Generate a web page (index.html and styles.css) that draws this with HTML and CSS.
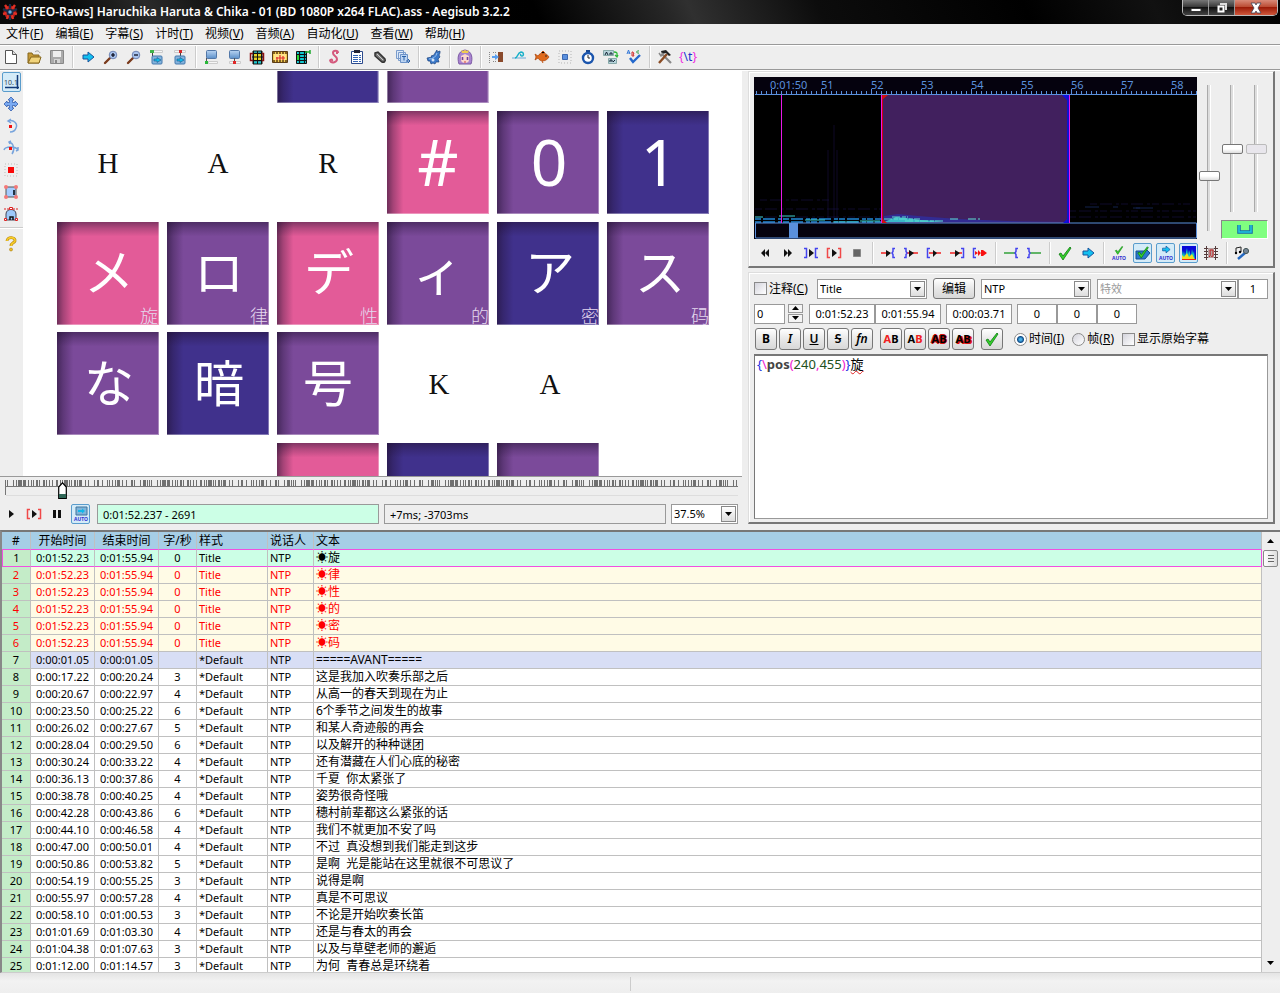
FILE: index.html
```html
<!DOCTYPE html>
<html lang="zh-CN">
<head>
<meta charset="utf-8">
<title>Aegisub 3.2.2</title>
<link rel="stylesheet" href="styles.css">
</head>
<body>
<svg class="defs" aria-hidden="true">
  <defs>
    <linearGradient id="shadeX" x1="0" x2="1" y1="0" y2="0"><stop offset="0" stop-color="#201030" stop-opacity=".6"/><stop offset=".06" stop-color="#201030" stop-opacity=".32"/><stop offset=".16" stop-color="#201030" stop-opacity="0"/></linearGradient>
    <linearGradient id="shadeY" x1="0" x2="0" y1="0" y2="1"><stop offset="0" stop-color="#201030" stop-opacity=".5"/><stop offset=".06" stop-color="#201030" stop-opacity=".25"/><stop offset=".14" stop-color="#201030" stop-opacity="0"/></linearGradient>
    <linearGradient id="screen" x1="0" x2="0" y1="0" y2="1"><stop offset="0" stop-color="#b9d4f2"/><stop offset="1" stop-color="#5b8fc9"/></linearGradient>
    <symbol id="arrow" viewBox="0 0 16 16"><path d="M3 6h5V3l6 5-6 5v-3H3z" fill="#12c0f0" stroke="#17539c"/></symbol>
    <symbol id="check" viewBox="0 0 16 16"><path d="M2 9l2-1 2 3 7-9 1 1L6 15z" fill="#35d02c" stroke="#0c7a10" stroke-width=".8"/></symbol>
    <symbol id="lens" viewBox="0 0 16 16"><path d="M2 14l5-5" stroke="#7a3a1c" stroke-width="2.4" stroke-linecap="round"/><circle cx="10" cy="6" r="3.8" fill="#a9c4ee" stroke="#7186b5"/></symbol>
    <symbol id="down" viewBox="0 0 7 4"><path d="M0 0h7L3.500 4z" fill="#000"/></symbol>
    <symbol id="up" viewBox="0 0 7 4"><path d="M0 4h7L3.500 0z" fill="#000"/></symbol>
    <symbol id="tile" viewBox="0 0 101 102"><path d="M0 0h101v102H0z" fill="currentColor"/><path d="M0 0h101v102H0z" fill="url(#shadeX)"/><path d="M0 0h101v102H0z" fill="url(#shadeY)"/><path d="M100.500 0v101.500H0" fill="none" stroke="#fff" stroke-opacity=".35"/></symbol>
  </defs>
</svg>

<header class="titlebar">
  <svg class="appicon" viewBox="0 0 16 16"><circle cx="8" cy="8" r="6.500" fill="#a01818"/><path d="M3 1l3 4M13 1l-3 4M1 10l4-1M15 10l-4-1M5 15l1-4M11 15l-1-4" stroke="#e03024" stroke-width="2.400"/><path d="M8 0v4M1 5l4 2M15 5l-4 2M8 16v-4" stroke="#18304c" stroke-width="2"/><circle cx="8" cy="8" r="3.500" fill="#1c2a48"/><circle cx="8" cy="8" r="1.700" fill="#62aee0"/></svg>
  <h1>[SFEO-Raws] Haruchika Haruta &amp; Chika - 01 (BD 1080P x264 FLAC).ass - Aegisub 3.2.2</h1>
  <div class="winbtns">
    <button aria-label="Minimize"><svg viewBox="0 0 12 12" width="12" height="12"><path d="M1 6.500h10v3H1z" fill="#fff" stroke="#333"/></svg></button>
    <button aria-label="Restore"><svg viewBox="0 0 12 12" width="12" height="12"><path d="M4 1h7v7H9V3H4z" fill="#ddd"/><path d="M2.500 4.500h5v5h-5z" fill="#222" stroke="#fff" stroke-width="2"/></svg></button>
    <button class="close" aria-label="Close"><svg viewBox="0 0 14 12" width="14" height="12"><path d="M2 1h4l1 2 1-2h4l-3 5 3 5H8L7 9l-1 2H2l3-5z" fill="#fff" stroke="#445" stroke-width=".8"/></svg></button>
  </div>
</header>

<nav class="menubar">
  <button>文件(<u>F</u>)</button><button>编辑(<u>E</u>)</button><button>字幕(<u>S</u>)</button><button>计时(<u>T</u>)</button><button>视频(<u>V</u>)</button><button>音频(<u>A</u>)</button><button>自动化(<u>U</u>)</button><button>查看(<u>W</u>)</button><button>帮助(<u>H</u>)</button>
</nav>

<div class="toolbar main-tools" role="toolbar">
  <button aria-label="New"><svg viewBox="0 0 16 16"><path d="M2.500 1.500h7l4 4v9h-11z" fill="#fff" stroke="#555"/><path d="M9.500 1.500v4h4" fill="#ddd" stroke="#555"/></svg></button>
  <button aria-label="Open"><svg viewBox="0 0 16 16"><path d="M2 14V4h4l1 2h6v8z" fill="#c59a38" stroke="#86671c"/><path d="M2 14l3-6h10l-2 6z" fill="#f1d47c" stroke="#86671c"/><path d="M9 3c2-2 4-1 5 1" fill="none" stroke="#999"/></svg></button>
  <button aria-label="Save"><svg viewBox="0 0 16 16"><path d="M1.500 1.500h13v13h-13z" fill="#aaa" stroke="#888"/><path d="M4 2h8v6H4z" fill="#eee"/><path d="M5 10h6v4H5z" fill="#d5d5d5"/><path d="M6 11h2v3H6z" fill="#888"/></svg></button>
  <i class="sep"></i>
  <button aria-label="Jump"><svg><use href="#arrow"/></svg></button>
  <button aria-label="Zoom in"><svg viewBox="0 0 16 16"><use href="#lens"/><path d="M8 6h4M10 4v4" stroke="#001" stroke-width="1.200"/></svg></button>
  <button aria-label="Zoom out"><svg viewBox="0 0 16 16"><use href="#lens"/><path d="M8 6h4" stroke="#001" stroke-width="1.200"/></svg></button>
  <button aria-label="Jump to start"><svg viewBox="0 0 16 16"><path d="M4.500 1.500h9v2h-9" fill="#f6f6f6" stroke="#ccc"/><path d="M1 1h4v3H1z" fill="#3fb54a"/><path d="M3.500 4v3" stroke="#444"/><rect x="3" y="7" width="10" height="8" rx="1" fill="#84b4de" stroke="#4478ac"/><path d="M5 10h3V8.500l4 2.500-4 2.500V12H5z" fill="#12b8ea" stroke="#205888" stroke-width=".6"/></svg></button>
  <button aria-label="Jump to end"><svg viewBox="0 0 16 16"><path d="M2.500 1.500h11v2h-11z" fill="#f6f6f6" stroke="#ccc"/><path d="M7 1h3v3H7z" fill="#d62a2a"/><path d="M8.500 4v3" stroke="#444"/><rect x="3" y="7" width="10" height="8" rx="1" fill="#84b4de" stroke="#4478ac"/><path d="M5 10h3V8.500l4 2.500-4 2.500V12H5z" fill="#12b8ea" stroke="#205888" stroke-width=".6"/></svg></button>
  <i class="sep"></i>
  <button aria-label="Start to video"><svg viewBox="0 0 16 16"><path d="M5.500 12.500h9v2h-9z" fill="#f6f6f6" stroke="#ccc"/><rect x="3.500" y="1.500" width="10" height="8" rx="1" fill="url(#screen)" stroke="#5378a8"/><path d="M3.500 9v3" stroke="#555"/><path d="M2 12h3v3H2z" fill="#28b838"/></svg></button>
  <button aria-label="End to video"><svg viewBox="0 0 16 16"><path d="M3.500 12.500h11v2h-11z" fill="#f6f6f6" stroke="#ccc"/><rect x="3.500" y="1.500" width="10" height="8" rx="1" fill="url(#screen)" stroke="#5378a8"/><path d="M8.500 9v3" stroke="#555"/><path d="M7 12h3v3H7z" fill="#e02828"/></svg></button>
  <button aria-label="Select visible"><svg viewBox="0 0 16 16"><path d="M4 2h9v13H4z" fill="#18c8d0" stroke="#111"/><path d="M1.500 4.500h13v7h-13z" fill="none" stroke="#8a1010" stroke-width="1.500"/><path d="M4 5h9v6H4z" fill="#e8d428"/><path d="M4.500 2v13M12.500 2v13M8.500 2v13M3 8h11M4 4.500h9M4 11.500h9" stroke="#111"/></svg></button>
  <button aria-label="Snap to scene"><svg viewBox="0 0 16 16"><path d="M.5 2.500h15v11H.5z" fill="#f2cc50" stroke="#5d3d14"/><path d="M1 4h14M1 12h14" stroke="#5d3d14" stroke-width="1.500" stroke-dasharray="2 1"/><path d="M2 5h12v6H2z" fill="#ffe48a"/><path d="M5 8v3M8 6v5M11 7v4M4 9h9" stroke="#e03030" stroke-width="1.200"/></svg></button>
  <button aria-label="Shift to frame"><svg viewBox="0 0 16 16"><path d="M1.500 2.500h10v12h-10z" fill="#12cad2" stroke="#111"/><path d="M2 5.500h9M2 8.500h9M2 11.500h9M4.500 3v11M9.500 3v11" stroke="#111" stroke-width="1.200"/><path d="M2 6h2v5H2z" fill="#28d834"/><path d="M10 3h5M15 1v4" stroke="#1faa30" stroke-width="1.500"/></svg></button>
  <i class="sep"></i>
  <button aria-label="Styles"><svg viewBox="0 0 16 16"><path d="M12 4c0-3-5-3-5 0s4 3 4 6-5 5-7 2M4 12c0-2 3-2 2 0M12 4h-2" fill="none" stroke="#d4587c" stroke-width="2"/></svg></button>
  <button aria-label="Properties"><svg viewBox="0 0 16 16"><path d="M2.500 2.500h11v12h-11z" fill="#fff" stroke="#2c4a8c"/><path d="M5 1h6v3H5z" fill="#223"/><path d="M4 6.500h8M4 8.500h8M4 10.500h8M4 12.500h8" stroke="#3464b4" stroke-dasharray="5 1 2 1"/></svg></button>
  <button aria-label="Attachments"><svg viewBox="0 0 16 16"><path d="M3 4l3-1 7 7c1 2-1 4-3 3L3 7z" fill="#777" stroke="#333" stroke-width="1.500"/><path d="M5 5l6 6" stroke="#ccc"/></svg></button>
  <button aria-label="Fonts"><svg viewBox="0 0 16 16"><path d="M1.500 1.500h7v8h-7zM3.500 3.500h7v8h-7z" fill="#dce8f8" stroke="#7a9ccc"/><path d="M5.500 5.500h7v8h-7z" fill="#bcd4f2" stroke="#6c92c8"/><path d="M7 7.500h4M9 7.500v4M11 12h4M13 10l2 2-2 2" stroke="#2b61a8" fill="none"/></svg></button>
  <i class="sep"></i>
  <button aria-label="Automation"><svg viewBox="0 0 16 16"><path d="M14 2l-3 1V1L9 4l-1 2-3 1 1 1-5 1 1 3 2 0 1 3 2-1 2 1 1-2 3 0-1-3 2-2-1-2 1-2z" fill="#3a78c8" stroke="#1c4480" stroke-width=".7"/><path d="M3 10c4 0 7-2 8-6" stroke="#98c0f0" fill="none"/><circle cx="7" cy="11" r="1.500" fill="#d4e4f8"/></svg></button>
  <i class="sep"></i>
  <button aria-label="Assistant"><svg viewBox="0 0 16 16"><path d="M2 15C0 9 1 2 8 1c7 1 8 8 6 14z" fill="#a884d0" stroke="#7c58a4"/><path d="M4 7l4-2 4 2v4c0 4-8 4-8 0z" fill="#fbd8cc"/><path d="M5.500 8v3M10.500 8v3" stroke="#7040a0" stroke-width="1.600"/><path d="M4 1l2 1 2-1 2 1 2-1-1 3H5z" fill="#f0cc50"/><path d="M7 13h2" stroke="#d04040"/></svg></button>
  <i class="sep"></i>
  <button aria-label="Shift times"><svg viewBox="0 0 16 16"><path d="M1.500 3v11M5 3.500h4M5 12.500h4" stroke="#888" stroke-dasharray="1 1"/><path d="M10 3h5v10h-5z" fill="#8a4a2c"/><path d="M4 7h3V5l4 3-4 3V9H4z" fill="#5aa0f0"/></svg></button>
  <button aria-label="Timing processor"><svg viewBox="0 0 16 16"><path d="M1 9h14" stroke="#6aaad8"/><path d="M4 9c3 0 2-5 6-6 3 0 3 4 1 4-1 0-2-1-1-2" fill="none" stroke="#18b0c8" stroke-width="1.500"/></svg></button>
  <button aria-label="Kanji timer"><svg viewBox="0 0 16 16"><path d="M1 5l3 2c2-4 8-4 11 1-3 5-9 5-11 1l-3 2 1-3z" fill="#e06a1c" stroke="#a8440c" stroke-width=".7"/><path d="M7 4l2-2 2 2M8 12l1 2" stroke="#c05010"/><circle cx="12" cy="7" r=".8" fill="#222"/></svg></button>
  <button aria-label="Resample"><svg viewBox="0 0 16 16"><path d="M2 2h12v12H2z" fill="none" stroke="#b5b5b5" stroke-dasharray="1 2"/><path d="M5.500 5.500h5v5h-5z" fill="#5a90de" stroke="#3c68b0"/></svg></button>
  <button aria-label="Timing"><svg viewBox="0 0 16 16"><path d="M6 1h4v2H6z" fill="#1a4890"/><circle cx="8" cy="9" r="5" fill="#fff" stroke="#1b55ad" stroke-width="2.400"/><path d="M8 6v3h2" fill="none" stroke="#222"/></svg></button>
  <button aria-label="Translation"><svg viewBox="0 0 16 16"><path d="M.5 1.500h10v5H.5zM5.500 9.500h8v5h-8z" fill="#b8d4dc" stroke="#8aa"/><path d="M2 6l1.500-3L5 6M7 6V4h2v2M7 13v-2h2v2M10 13l2-2" fill="none" stroke="#123"/><path d="M11 3c4 0 3 2 3 5m-2-2l2 2 1-2" fill="none" stroke="#2cb838" stroke-width="1.300"/></svg></button>
  <button aria-label="Spell check"><svg viewBox="0 0 16 16"><path d="M1 5l1.500-4L4 5M2 4h2" fill="none" stroke="#3478d8"/><path d="M6 3v4h2L7 5h1L7 3z" fill="none" stroke="#d03030"/><path d="M13 2c-3-1-3 3 0 2" fill="none" stroke="#209838"/><path d="M4 9l3 4 7-7" fill="none" stroke="#2468cc" stroke-width="2.400"/></svg></button>
  <i class="sep"></i>
  <button aria-label="Options"><svg viewBox="0 0 16 16"><path d="M5 5l9 9" stroke="#888" stroke-width="2.200"/><path d="M2 14l8-9" stroke="#8a4c24" stroke-width="2.400"/><path d="M4 2l5-1 5 5-2 1-3-3-4 1z" fill="#222"/><path d="M2 4l2 3 2-3" fill="none" stroke="#888" stroke-width="1.500"/></svg></button>
  <button aria-label="Toggle tags" class="tag"><span>{</span>\t<span>}</span></button>
</div>

<main class="workspace">
  <section class="video">
    <div class="stage">
      <div class="visual-tools" role="toolbar">
        <button class="on" aria-label="Standard"><svg viewBox="0 0 16 16"><text x="0" y="11" font-size="7" fill="#345">10.1</text><path d="M1 13.500h14M13.500 1v14" stroke="#123a78" stroke-width="1.500"/></svg></button>
        <button aria-label="Drag"><svg viewBox="0 0 16 16"><path d="M8 1l3 3H9.500v2.500H12V5l3 3-3 3V9.500H9.500V12H11l-3 3-3-3h1.500V9.500H4V11L1 8l3-3v1.500h2.500V4H5z" fill="#7aaaf2" stroke="#365fae" stroke-width=".8"/></svg></button>
        <button aria-label="Rotate Z"><svg viewBox="0 0 16 16"><path d="M5 3c6-2 10 3 8 7-1 3-4 4-6 4M8 1L5 3l3 2" fill="none" stroke="#78a4dc" stroke-width="1.500"/><path d="M6 7h3v3H6z" fill="#f01010"/></svg></button>
        <button aria-label="Rotate XY"><svg viewBox="0 0 16 16"><path d="M1 10c1-4 12-4 14 0M6 2c5 1 6 8 3 12M8 1L6 2l1 2M13 11l2-1V7" fill="none" stroke="#78a4dc" stroke-width="1.500"/><path d="M6 7h3v3H6z" fill="#f01010"/></svg></button>
        <button aria-label="Scale"><svg viewBox="0 0 16 16"><path d="M2 2h12v12H2z" fill="none" stroke="#bbb" stroke-dasharray="1 2"/><path d="M5 5h6v6H5z" fill="#fa0808"/></svg></button>
        <button aria-label="Clip"><svg viewBox="0 0 16 16"><path d="M3 3h10v10H3z" fill="#a4ccff" stroke="#555"/><g fill="#f47878"><circle cx="3" cy="3" r="2"/><circle cx="13" cy="3" r="2"/><circle cx="3" cy="13" r="2"/><circle cx="13" cy="13" r="2"/></g><path d="M10 6h2v5h-2" fill="#234"/></svg></button>
        <button aria-label="Vector clip"><svg viewBox="0 0 16 16"><path d="M3 14V8c0-6 10-6 10 0v6z" fill="#9cc8fa" stroke="#445"/><path d="M1 3h14" stroke="#d22" stroke-dasharray="2 1"/><path d="M6.500 1.500h3v2h-3zM1.500 12.500h2v2h-2zM12.500 12.500h2v2h-2z" fill="#fff" stroke="#d22"/><path d="M7 14v-3h3v3" stroke="#111" fill="none" stroke-width="1.500"/></svg></button>
        <i class="hsep"></i>
        <button aria-label="Help"><svg viewBox="0 0 16 16"><path d="M4 5c0-5 9-4 8 0-1 2-4 2-4 5" fill="none" stroke="#b98812" stroke-width="2.800"/><path d="M4 5c0-5 9-4 8 0-1 2-4 2-4 5" fill="none" stroke="#f8ce28" stroke-width="1.600"/><circle cx="8" cy="13.500" r="1.500" fill="#f0c020" stroke="#a87a10" stroke-width=".6"/></svg></button>
      </div>
      <svg class="frame" viewBox="23 71 719 405" preserveAspectRatio="xMidYMid slice">
        <g>
          <use href="#tile" color="#40318c" x="277" y="1" width="102" height="102"/><use href="#tile" color="#7b4a9a" x="387" y="1" width="102" height="102"/>
          <use href="#tile" color="#e35b98" x="387" y="111" width="102" height="103"/><use href="#tile" color="#7b4a9a" x="497" y="111" width="102" height="103"/><use href="#tile" color="#40318c" x="607" y="111" width="102" height="103"/>
          <use href="#tile" color="#e35b98" x="57" y="222" width="102" height="103"/><use href="#tile" color="#7b4a9a" x="167" y="222" width="102" height="103"/><use href="#tile" color="#e35b98" x="277" y="222" width="102" height="103"/><use href="#tile" color="#7b4a9a" x="387" y="222" width="102" height="103"/><use href="#tile" color="#40318c" x="497" y="222" width="102" height="103"/><use href="#tile" color="#7b4a9a" x="607" y="222" width="102" height="103"/>
          <use href="#tile" color="#7b4a9a" x="57" y="332" width="102" height="103"/><use href="#tile" color="#40318c" x="167" y="332" width="102" height="103"/><use href="#tile" color="#7b4a9a" x="277" y="332" width="102" height="103"/>
          <use href="#tile" color="#e35b98" x="277" y="443" width="102" height="103"/><use href="#tile" color="#40318c" x="387" y="443" width="102" height="103"/><use href="#tile" color="#7b4a9a" x="497" y="443" width="102" height="103"/>
        </g>
        <g class="latin"><text x="108" y="173">H</text><text x="218" y="173">A</text><text x="328" y="173">R</text><text x="439" y="394">K</text><text x="550" y="394">A</text></g>
        <g class="num"><text x="438" y="186">#</text><text x="549" y="186">0</text><text x="659" y="186">1</text></g>
        <g class="kana" lang="ja"><text x="109" y="291">メ</text><text x="219" y="291">ロ</text><text x="329" y="291">デ</text><text x="438" y="291">ィ</text><text x="550" y="291">ア</text><text x="660" y="291">ス</text><text x="109" y="402">な</text><text x="219" y="402">暗</text><text x="328" y="402">号</text></g>
        <g class="han"><text x="149" y="323">旋</text><text x="259" y="323">律</text><text x="369" y="323">性</text><text x="480" y="323">的</text><text x="590" y="323">密</text><text x="700" y="323">码</text></g>
      </svg>
    </div>
    <div class="seek">
      <svg class="keys" height="17" width="100%">
        <path d="M1.500 0v15" stroke="#777"/><path d="M2 15.500h2000" stroke="#ddd"/><path d="M1 6.500h2000" stroke="#777"/>
        <line x1="1" x2="2000" y1="3" y2="3" stroke="#707070" stroke-width="6" stroke-dasharray="1 1 1 5 1 2 1 1 4 1 3 2 1 2 1 1 1 2 2 1 1 3 2 1 1 2 1 2 1 3 2 2 1 1 1 1 4 1 1 1 1 2 2 1 1 1 3 3 1 2 1 5 1 2 2 3 1 4 1 1 1 2 1 2 1 1 3 2 1 3 1 4 2 1 1 5 1 2 3 1 1 1"/>
      </svg>
      <input type="range" aria-label="Video position" min="0" max="1000" value="74">
    </div>
    <div class="vcontrols">
      <div class="toolbar">
        <button aria-label="Play"><svg viewBox="0 0 16 16"><path d="M6 4l5 4-5 4z" fill="#111"/></svg></button>
        <button aria-label="Play line"><svg viewBox="0 0 16 16"><path d="M4 3.500H1.500v9H4M12 3.500h2.500v9H12" fill="none" stroke="#f04848" stroke-width="1.500"/><path d="M6 4l5 4-5 4z" fill="#111"/></svg></button>
        <button aria-label="Pause"><svg viewBox="0 0 16 16"><path d="M4 4h3v8H4zM9 4h3v8H9z" fill="#111"/></svg></button>
        <button class="on" aria-label="Auto scroll video"><svg viewBox="0 0 16 16"><path d="M3 1h11v8H3z" fill="#7fb4da" stroke="#43749c"/><path d="M5 4h4V2.500L12 5 9 7.500V6H5z" fill="#10b8ea"/><text x="8" y="15" text-anchor="middle" font-size="5" font-weight="700" fill="#3030d0">AUTO</text></svg></button>
      </div>
      <input class="pos green" aria-label="Position" readonly value="0:01:52.237 - 2691">
      <input class="pos" aria-label="Offset" readonly value="+7ms; -3703ms">
      <div class="combo zoombox"><select aria-label="Zoom"><option>37.5%</option></select><span><svg width="7" height="4"><use href="#down"/></svg></span></div>
    </div>
  </section>

  <section class="side">
    <div class="panel audio">
      <div class="audio-top">
        <svg class="spectrum" viewBox="754 77 443 162" preserveAspectRatio="none">
          <path d="M754 77h443v162H754z" fill="#05020e"/><path d="M754 95h443v128H754z" fill="#000"/>
          <path d="M828 150v70M834 125v95M837 150v70" stroke="#181040" opacity=".6"/>
          <path d="M755 217h126M755 209h126M760 200h70M1069 217h127M1069 211h127M1090 204h100" stroke="#1a1348" stroke-width="2" stroke-dasharray="7 3 12 4 3 2" opacity=".3"/>
          <path d="M755 219h126M755 222h126" stroke="#1766a0" stroke-width="2" stroke-dasharray="6 2 12 3 4 1"/><path d="M755 217h8M779 216h16M805 220h20M833 222h25M860 221h20" stroke="#3ed0c8" stroke-width="1"/>
          <path d="M1085 207h14M1113 207h5M1133 208h20M1136 208h4" stroke="#203a80" opacity=".6"/>
          <path d="M883 95h186v128H883z" fill="#41205e"/>
          <path d="M884 222v-6l14-2 20 2 40 3 50 2 60 1z" fill="#2e2ea0" opacity=".8"/><path d="M884 222l12-5 10 1 14 2 22 1-10 1z" fill="#3ab8c8"/><path d="M884 219h36M892 217h16M905 221h40M950 219h9M968 219h12" stroke="#60e0d0" stroke-dasharray="8 2 4 1"/>
          <path d="M755 94.500h442M755.500 223v15h441v-15z" fill="none" stroke="#5a90dc"/>
          <path d="M756 92.500h441" stroke="#5a90dc" stroke-width="3" stroke-dasharray="1 4"/><path d="M771 91.500h426" stroke="#5a90dc" stroke-width="5" stroke-dasharray="1 49"/>
          <path d="M789 223h9v15h-9z" fill="#5a90dc"/>
          <path d="M781.500 95v128M881.500 95v128M1069.500 95v128" stroke="#e818e8"/>
          <path d="M882.500 95v128" stroke="#d00010"/><path d="M1068 95v128" stroke="#1010d0" stroke-width="2"/>
          <path d="M882 95h6l-6 5zM882 223h5l-5-5z" fill="#d01010"/><path d="M1067 95h-5l5 5zM1067 223h-4l4-4z" fill="#1010e0"/>
          <g class="ruler"><text x="770" y="89">0:01:50</text><text x="821" y="89">51</text><text x="871" y="89">52</text><text x="921" y="89">53</text><text x="971" y="89">54</text><text x="1021" y="89">55</text><text x="1071" y="89">56</text><text x="1121" y="89">57</text><text x="1171" y="89">58</text></g>
        </svg>
        <input class="vr tall" type="range" aria-label="Horizontal zoom" value="63">
        <div class="volume">
          <input class="vr" type="range" aria-label="Vertical zoom" value="50"><input class="vr dim" type="range" aria-label="Volume" value="50">
          <button class="link" aria-label="Link"><svg width="16" height="9" viewBox="0 0 16 9"><path d="M2 0v7h12V0" fill="none" stroke="#1565a8" stroke-width="3.500"/><path d="M2 0v7h12V0" fill="none" stroke="#20c8e0" stroke-width="1.500"/></svg></button>
        </div>
      </div>
      <div class="toolbar" role="toolbar">
        <button aria-label="Previous"><svg viewBox="0 0 16 16"><path d="M8 4v8L4 8zM12 4v8L8 8z" fill="#111"/></svg></button>
        <button aria-label="Next"><svg viewBox="0 0 16 16"><path d="M4 4l4 4-4 4zM8 4l4 4-4 4z" fill="#111"/></svg></button>
        <button aria-label="Play selection"><svg viewBox="0 0 16 16"><path d="M1 3.500h2.500v9H1M15 3.500h-2.500v9H15" fill="none" stroke="#4444ee" stroke-width="1.500"/><path d="M6 4l5 4-5 4z" fill="#111"/></svg></button>
        <button aria-label="Play line"><svg viewBox="0 0 16 16"><path d="M4 3.500H1.500v9H4M12 3.500h2.500v9H12" fill="none" stroke="#f04848" stroke-width="1.500"/><path d="M6 4l5 4-5 4z" fill="#111"/></svg></button>
        <button aria-label="Stop"><svg viewBox="0 0 16 16"><path d="M4.500 4.500h7v7h-7z" fill="#666" stroke="#888"/></svg></button>
        <i class="sep"></i>
        <button aria-label="Play before"><svg viewBox="0 0 16 16"><path d="M1 8h9" stroke="#f02020" stroke-width="1.500"/><path d="M6 5l5 3-5 4z" fill="#111"/><path d="M15 3.500h-2v3l-1 1.500 1 1.500v3h2" fill="none" stroke="#4444ee" stroke-width="1.500"/></svg></button>
        <button aria-label="Play after"><svg viewBox="0 0 16 16"><path d="M4 8h11" stroke="#f02020" stroke-width="1.500"/><path d="M6 5l5 3-5 4z" fill="#111"/><path d="M1 3.500h2v3L4 8 3 9.500v3H1" fill="none" stroke="#4444ee" stroke-width="1.500"/></svg></button>
        <button aria-label="Play first"><svg viewBox="0 0 16 16"><path d="M3 8h12" stroke="#f02020" stroke-width="1.500"/><path d="M7 5l4 3-4 4z" fill="#111"/><path d="M4 3.500H1.500v9H4" fill="none" stroke="#4444ee" stroke-width="1.500"/></svg></button>
        <button aria-label="Play last"><svg viewBox="0 0 16 16"><path d="M1 8h12" stroke="#f02020" stroke-width="1.500"/><path d="M6 5l5 3-5 4z" fill="#111"/><path d="M12 3.500h2.500v9H12" fill="none" stroke="#4444ee" stroke-width="1.500"/></svg></button>
        <button aria-label="Play to end"><svg viewBox="0 0 16 16"><path d="M4 3.500H1.500v9H4" fill="none" stroke="#4444ee" stroke-width="1.500"/><path d="M3 6l3 2-3 2zM6 5l3 3-3 3zM9 5h2l4 3-4 3H9z" fill="#f81010"/></svg></button>
        <i class="sep"></i>
        <button aria-label="Lead in"><svg viewBox="0 0 16 16"><path d="M1 8h11" stroke="#30a038" stroke-width="1.500"/><path d="M15 3.500h-2v3l-1 1.500 1 1.500v3h2" fill="none" stroke="#4444ee" stroke-width="1.500"/></svg></button>
        <button aria-label="Lead out"><svg viewBox="0 0 16 16"><path d="M4 8h11" stroke="#30a038" stroke-width="1.500"/><path d="M1 3.500h2v3L4 8 3 9.500v3H1" fill="none" stroke="#4444ee" stroke-width="1.500"/></svg></button>
        <i class="sep"></i>
        <button aria-label="Commit"><svg><use href="#check"/></svg></button>
        <button aria-label="Go to selection"><svg><use href="#arrow"/></svg></button>
        <i class="sep"></i>
        <button aria-label="Auto commit"><svg viewBox="0 0 16 16"><use href="#check" x="3" y="0" width="10" height="10"/><text x="8" y="15" text-anchor="middle" font-size="5" font-weight="700" fill="#3030d0">AUTO</text></svg></button>
        <button class="on" aria-label="Auto next"><svg viewBox="0 0 16 16"><path d="M1 6h10V4l4 4-5 6H1z" fill="#2a78d0" stroke="#174c90"/><use href="#check" width="14" height="14" x="1"/></svg></button>
        <button class="on" aria-label="Auto scroll"><svg viewBox="0 0 16 16"><use href="#arrow" x="2" y="-1" width="12" height="11"/><text x="8" y="15" text-anchor="middle" font-size="5" font-weight="700" fill="#3030d0">AUTO</text></svg></button>
        <button class="on" aria-label="Spectrum"><svg viewBox="0 0 16 16"><path d="M1 1h14v14H1z" fill="#0808d8"/><path d="M1 15V5l1 5 1-4 1 5 2-8 1 7 1-5 2 6 1-7 1 5 1-3 1 9z" fill="#10c8c0"/><path d="M1 15v-5l2 2 3-4 2 4 3-3 3 6z" fill="#f0e020"/><path d="M1 14h14v1H1z" fill="#f02010"/></svg></button>
        <button aria-label="Medusa"><svg viewBox="0 0 16 16"><path d="M3.500 1v14M12.500 1v14M1 3.500h14M1 6.500h14M1 9.500h14M1 12.500h14" stroke="#553c3c"/><path d="M5 3h6v10H5z" fill="#b8a0a0"/><path d="M6 12c2-1 1-4 1-7h3v5c0 2-1 2-2 1" stroke="#c02020" fill="none"/></svg></button>
        <i class="sep"></i>
        <button aria-label="Karaoke"><svg viewBox="0 0 16 16"><path d="M2 8V3l5-1v5" fill="none" stroke="#222"/><circle cx="2" cy="8" r="1.200"/><circle cx="6" cy="7" r="1.200"/><path d="M4 14l7-6" stroke="#2468c0" stroke-width="2.500"/><circle cx="12" cy="6" r="2.600" fill="#789" stroke="#455"/></svg></button>
      </div>
    </div>

    <div class="panel edit">
      <div class="row">
        <label class="cb"><input type="checkbox">注释(<u>C</u>)</label>
        <div class="combo style"><select aria-label="Style"><option>Title</option></select><span><svg width="7" height="4"><use href="#down"/></svg></span></div>
        <button class="btn wide">编辑</button>
        <div class="combo style"><select aria-label="Actor"><option>NTP</option></select><span><svg width="7" height="4"><use href="#down"/></svg></span></div>
        <div class="fxgroup"><div class="combo fx"><select aria-label="Effect"><option>特效</option></select><span><svg width="7" height="4"><use href="#down"/></svg></span></div><input class="num-in" aria-label="Characters" value="1"></div>
      </div>
      <div class="row tight">
        <div class="spin"><input aria-label="Layer" value="0"><div><button aria-label="Up"><svg width="7" height="4"><use href="#up"/></svg></button><button aria-label="Down"><svg width="7" height="4"><use href="#down"/></svg></button></div></div>
        <div class="times"><input aria-label="Start" value="0:01:52.23"><input aria-label="End" value="0:01:55.94"></div>
        <div class="times"><input aria-label="Duration" value="0:00:03.71"></div>
        <div class="margins"><input aria-label="Left margin" value="0"><input aria-label="Right margin" value="0"><input aria-label="Vertical margin" value="0"></div>
      </div>
      <div class="row fmt">
        <div class="set"><button class="btn"><b>B</b></button><button class="btn"><i>I</i></button><button class="btn"><u>U</u></button><button class="btn"><s>S</s></button><button class="btn"><i>fn</i></button></div>
        <div class="set"><button class="btn ab"><span>A</span>B</button><button class="btn ab">A<span>B</span></button><button class="btn ab outline">AB</button><button class="btn ab shadow">AB</button></div>
        <button class="btn" aria-label="Commit"><svg width="16" height="16"><use href="#check"/></svg></button>
        <div class="opts"><label class="cb"><input type="radio" name="unit" checked>时间(<u>I</u>)</label><label class="cb"><input type="radio" name="unit">帧(<u>R</u>)</label><label class="cb"><input type="checkbox">显示原始字幕</label></div>
      </div>
      <div class="editor" contenteditable="true" role="textbox" aria-label="Line text" spellcheck="false"><span class="brace">{</span><span class="punc">\</span><b>pos</b><span class="punc">(</span><span class="val">240</span><span class="punc">,</span><span class="val">455</span><span class="punc">)</span><span class="brace">}</span><span class="typo">旋</span></div>
    </div>
  </section>
</main>

<section class="grid">
  <div class="rows">
    <table>
      <colgroup><col class="c-n"><col class="c-t"><col class="c-t"><col class="c-cps"><col class="c-style"><col class="c-actor"><col></colgroup>
      <thead><tr><th>#</th><th>开始时间</th><th>结束时间</th><th>字/秒</th><th>样式</th><th>说话人</th><th>文本</th></tr></thead>
      <tbody>
        <tr class="active"><td>1</td><td>0:01:52.23</td><td>0:01:55.94</td><td>0</td><td>Title</td><td>NTP</td><td>☀旋</td></tr>
        <tr class="hit"><td>2</td><td>0:01:52.23</td><td>0:01:55.94</td><td>0</td><td>Title</td><td>NTP</td><td>☀律</td></tr>
        <tr class="hit"><td>3</td><td>0:01:52.23</td><td>0:01:55.94</td><td>0</td><td>Title</td><td>NTP</td><td>☀性</td></tr>
        <tr class="hit"><td>4</td><td>0:01:52.23</td><td>0:01:55.94</td><td>0</td><td>Title</td><td>NTP</td><td>☀的</td></tr>
        <tr class="hit"><td>5</td><td>0:01:52.23</td><td>0:01:55.94</td><td>0</td><td>Title</td><td>NTP</td><td>☀密</td></tr>
        <tr class="hit"><td>6</td><td>0:01:52.23</td><td>0:01:55.94</td><td>0</td><td>Title</td><td>NTP</td><td>☀码</td></tr>
        <tr class="comment"><td>7</td><td>0:00:01.05</td><td>0:00:01.05</td><td></td><td>*Default</td><td>NTP</td><td>=====AVANT=====</td></tr>
        <tr><td>8</td><td>0:00:17.22</td><td>0:00:20.24</td><td>3</td><td>*Default</td><td>NTP</td><td>这是我加入吹奏乐部之后</td></tr>
        <tr><td>9</td><td>0:00:20.67</td><td>0:00:22.97</td><td>4</td><td>*Default</td><td>NTP</td><td>从高一的春天到现在为止</td></tr>
        <tr><td>10</td><td>0:00:23.50</td><td>0:00:25.22</td><td>6</td><td>*Default</td><td>NTP</td><td>6个季节之间发生的故事</td></tr>
        <tr><td>11</td><td>0:00:26.02</td><td>0:00:27.67</td><td>5</td><td>*Default</td><td>NTP</td><td>和某人奇迹般的再会</td></tr>
        <tr><td>12</td><td>0:00:28.04</td><td>0:00:29.50</td><td>6</td><td>*Default</td><td>NTP</td><td>以及解开的种种谜团</td></tr>
        <tr><td>13</td><td>0:00:30.24</td><td>0:00:33.22</td><td>4</td><td>*Default</td><td>NTP</td><td>还有潜藏在人们心底的秘密</td></tr>
        <tr><td>14</td><td>0:00:36.13</td><td>0:00:37.86</td><td>4</td><td>*Default</td><td>NTP</td><td>千夏&nbsp; 你太紧张了</td></tr>
        <tr><td>15</td><td>0:00:38.78</td><td>0:00:40.25</td><td>4</td><td>*Default</td><td>NTP</td><td>姿势很奇怪哦</td></tr>
        <tr><td>16</td><td>0:00:42.28</td><td>0:00:43.86</td><td>6</td><td>*Default</td><td>NTP</td><td>穗村前辈都这么紧张的话</td></tr>
        <tr><td>17</td><td>0:00:44.10</td><td>0:00:46.58</td><td>4</td><td>*Default</td><td>NTP</td><td>我们不就更加不安了吗</td></tr>
        <tr><td>18</td><td>0:00:47.00</td><td>0:00:50.01</td><td>4</td><td>*Default</td><td>NTP</td><td>不过&nbsp; 真没想到我们能走到这步</td></tr>
        <tr><td>19</td><td>0:00:50.86</td><td>0:00:53.82</td><td>5</td><td>*Default</td><td>NTP</td><td>是啊&nbsp; 光是能站在这里就很不可思议了</td></tr>
        <tr><td>20</td><td>0:00:54.19</td><td>0:00:55.25</td><td>3</td><td>*Default</td><td>NTP</td><td>说得是啊</td></tr>
        <tr><td>21</td><td>0:00:55.97</td><td>0:00:57.28</td><td>4</td><td>*Default</td><td>NTP</td><td>真是不可思议</td></tr>
        <tr><td>22</td><td>0:00:58.10</td><td>0:01:00.53</td><td>3</td><td>*Default</td><td>NTP</td><td>不论是开始吹奏长笛</td></tr>
        <tr><td>23</td><td>0:01:01.69</td><td>0:01:03.30</td><td>4</td><td>*Default</td><td>NTP</td><td>还是与春太的再会</td></tr>
        <tr><td>24</td><td>0:01:04.38</td><td>0:01:07.63</td><td>3</td><td>*Default</td><td>NTP</td><td>以及与草壁老师的邂逅</td></tr>
        <tr><td>25</td><td>0:01:12.00</td><td>0:01:14.57</td><td>3</td><td>*Default</td><td>NTP</td><td>为何&nbsp; 青春总是环绕着</td></tr>
      </tbody>
    </table>
  </div>
  <div class="scroll"><button aria-label="Scroll up"><svg width="7" height="4"><use href="#up"/></svg></button><div class="thumb"></div><button class="end" aria-label="Scroll down"><svg width="7" height="4"><use href="#down"/></svg></button></div>
</section>
<footer class="status"><span></span><span></span></footer>
</body>
</html>
```
FILE: styles.css
```css
* { box-sizing: border-box; }
body {
  margin: 0;
  height: 100vh;
  display: flex;
  flex-direction: column;
  background: #eee;
  color: #000;
  font: 12px/16px "Noto Sans", "Noto Sans CJK SC", sans-serif;
  overflow: hidden;
}
button, input, select { font: inherit; color: inherit; margin: 0; padding: 0; border-radius: 0; }
button { border: 0; background: none; }
svg { display: block; }
.defs { position: absolute; width: 0; height: 0; }

/* title bar */
.titlebar {
  display: flex;
  align-items: center;
  gap: 4px;
  height: 24px;
  flex: none;
  padding-left: 2px;
  background: linear-gradient(65deg, #0a0a0a 6%, #2a2a2a 12%, #050505 20%, #000 42%, #262626 52%, #303030 54%, #0c0c0c 64%, #000 80%, #111 90%, #000);
  color: #fff;
}
.appicon { width: 16px; height: 16px; }
.titlebar h1 { margin: 0; flex: 1; font-size: 12px; line-height: 20px; font-weight: 600; }
.winbtns {
  display: flex;
  align-self: flex-start;
  height: 16px;
  margin-right: 2px;
  border: 1px solid #bbb;
  border-top: 0;
  border-radius: 0 0 5px 5px;
  overflow: hidden;
}
.winbtns button {
  width: 26px;
  display: grid;
  place-items: center;
  background: linear-gradient(#777, #333 50%, #111 50%, #444);
  border-right: 1px solid #999;
}
.winbtns .close { width: 42px; border: 0; background: linear-gradient(#d88a78, #b8452c 50%, #9c1c08 50%, #d0583c); }

/* menus and toolbars */
.menubar { display: flex; flex: none; gap: 12px; height: 21px; padding: 0 6px; border-bottom: 1px solid #999; }
.menubar button { line-height: 18px; }
u { text-underline-offset: 1px; }
.toolbar { display: flex; align-items: center; flex: none; height: 22px; }
.main-tools { height: 25px; align-items: flex-start; border-top: 1px solid #fff; border-bottom: 1px solid #999; }
.toolbar button, .visual-tools button { width: 23px; height: 22px; display: grid; place-items: center; flex: none; padding-right: 1px; }
.toolbar svg, .visual-tools svg { width: 16px; height: 16px; }
.toolbar .sep { width: 2px; height: 22px; margin: 0 3px; border-left: 1px solid #ccc; border-right: 1px solid #fff; flex: none; }
.toolbar .on, .visual-tools .on {
  width: 19px;
  height: 20px;
  margin: 1px 2px;
  padding: 0;
  border: 1px solid #5a9ccc;
  border-radius: 2px;
  background: #d4ebf8;
}
.toolbar .tag { display: block; color: #2030d0; }
.tag span { color: #f02ce0; }

/* workspace */
.workspace { display: flex; flex: none; gap: 6px; border-top: 1px solid #fff; }
.video { flex: 1 1 742px; min-width: 0; display: flex; flex-direction: column; }
.stage { display: flex; border-bottom: 1px solid #999; background: #fff; }
.visual-tools { width: 23px; flex: none; background: #eee; }
.hsep { display: block; height: 2px; margin: 2px 0 4px; border-top: 1px solid #ccc; border-bottom: 1px solid #fff; }
.frame { flex: 1; min-width: 0; }
.frame text { text-anchor: middle; }
.latin { font: 29px "Liberation Serif", serif; fill: #111; }
.num { font: 400 64px "Noto Sans", sans-serif; fill: #fff; }
.kana { font: 50px "Noto Sans CJK JP", sans-serif; fill: #fff; }
.han { font: 300 18px "Noto Sans CJK SC", sans-serif; fill: #e4d8ee; }
.seek { display: grid; height: 24px; padding: 3px 4px 0; }
.seek > * { grid-area: 1 / 1; }
.seek input { appearance: none; width: 100%; height: 21px; background: none; padding: 0; }
.seek input::-webkit-slider-thumb {
  appearance: none;
  width: 9px;
  height: 17px;
  background: url("data:image/svg+xml,%3Csvg xmlns='http://www.w3.org/2000/svg' viewBox='0 0 9 17'%3E%3Cpath d='M.7 16.300V5L4.500.8 8.300 5v11.300z' fill='%23fff' stroke='%23000' stroke-width='1.200'/%3E%3Cpath d='M1 12h7v4H1z' fill='%23306858'/%3E%3C/svg%3E");
}
.vcontrols { display: flex; gap: 5px; align-items: center; padding: 2px 4px 0 0; }
.vcontrols .toolbar { width: 92px; }
.pos { flex: 1; min-width: 0; height: 20px; padding: 0 5px; border: 1px solid #999; background: #eee; font-size: 11px; }
.green { background: #ccffe6; }
.combo { position: relative; height: 20px; }
.combo select {
  appearance: none;
  width: 100%;
  height: 100%;
  padding: 0 20px 0 2px;
  border: 1px solid #999;
  background: #fff;
  font-size: 11px;
  line-height: 16px;
}
.combo > span {
  position: absolute;
  right: 2px;
  top: 2px;
  width: 15px;
  height: 16px;
  display: grid;
  place-items: center;
  border: 1px solid #888;
  background: linear-gradient(#fff, #ddd);
  pointer-events: none;
}
.zoombox { width: 67px; }

/* right side */
.side { flex: 1 1 527px; min-width: 0; margin-right: 5px; display: flex; flex-direction: column; gap: 4px; padding-bottom: 6px; }
.panel { border: 1px solid #ddd; border-right: 2px solid #777; border-bottom: 2px solid #777; padding: 5px; box-shadow: inset 1px 1px #fff; }
.audio { padding-bottom: 2px; }
.audio-top { display: flex; gap: 1px; height: 162px; margin-right: -1px; }
.audio .toolbar { margin-top: 3px; }
.spectrum { flex: 1; min-width: 0; height: 162px; }
.ruler { font-size: 11px; fill: #5a90dc; }
.vr {
  appearance: none;
  writing-mode: vertical-lr;
  width: 22px;
  height: 127px;
  margin: 8px 0 0;
  background: linear-gradient(90deg, transparent 9px, #aaa 9px, #aaa 10px, #ddd 10px, #ddd 12px, #fff 12px, #fff 13px, transparent 13px);
}
.vr.tall { height: 146px; }
.vr::-webkit-slider-thumb {
  appearance: none;
  width: 21px;
  height: 10px;
  border: 1px solid #777;
  border-radius: 2px;
  background: linear-gradient(#fff 50%, #ddd);
}
.vr.dim::-webkit-slider-thumb { border-color: #bbb; background: #e8e6ec; }
.volume { display: grid; grid-template-columns: 24px 24px; align-content: space-between; }
.link { grid-column: 1 / 3; height: 19px; width: 47px; display: grid; place-items: center; background: #80ff80; border: 1px solid #888; border-right-color: #fff; border-bottom-color: #fff; }

.edit { flex: 1; display: flex; flex-direction: column; gap: 4px; padding-bottom: 3px; }
.row { display: flex; align-items: center; gap: 6px; height: 21px; }
.row.tight { gap: 5px; }
.cb { display: flex; align-items: center; white-space: nowrap; }
.cb input { appearance: none; width: 13px; height: 13px; margin-right: 2px; border: 1px solid #8a8a8a; background: linear-gradient(135deg, #d4d4dc, #fff); flex: none; }
.cb input[type="radio"] { border-radius: 50%; margin-right: 2px; }
.cb input[type="radio"]:checked { background: radial-gradient(#48b0e8 1px, #104c88 3px, #fff 4px); }
.style { width: 110px; }
.row > .cb { width: 57px; }
.btn {
  width: 22px;
  height: 22px;
  display: grid;
  place-items: center;
  border: 1px solid #777;
  border-radius: 3px;
  background: linear-gradient(#fff, #e8e8e8 50%, #d8d8d8);
  font-size: 12px;
  line-height: 14px;
  white-space: nowrap;
}
.btn.wide { width: 42px; height: 21px; }
.fxgroup { display: flex; flex: 1; min-width: 0; }
.fx { flex: 1; color: #999; }
.row input:not([type]) { height: 20px; border: 1px solid #999; background: #fff; text-align: center; font-size: 11px; min-width: 0; }
.row .num-in { width: 30px; }
.spin { display: flex; gap: 3px; width: 50px; }
.row .spin input { width: 31px; text-align: left; padding-left: 2px; }
.spin div { display: flex; flex-direction: column; gap: 1px; width: 15px; }
.spin button { height: 9px; display: grid; place-items: center; border: 1px solid #999; background: #f4f4f4; }
.times input { width: 66px; }
.margins input { width: 40px; }
.times, .margins, .set { display: flex; }
.row.fmt { height: 22px; gap: 7px; padding-left: 1px; }
.set { gap: 2px; }
.fmt .btn i, .fmt .btn u, .fmt .btn s { font-weight: 600; }
.fmt .ab { display: block; font-size: 11px; font-weight: 700; }
.ab span { color: #f02020; }
.ab.outline { text-shadow: 1px 0 #d01010, -1px 0 #d01010, 0 1px #d01010, 0 -1px #d01010; }
.ab.shadow { text-shadow: 1px 1px #e01010, 2px 1px #e01010; }
.opts { display: flex; gap: 8px; padding-left: 4px; }
.opts .cb { width: auto; }
.editor {
  flex: 1;
  min-height: 165px;
  padding: 0 2px;
  border: 1px solid #999;
  border-top: 2px solid #777;
  border-left-color: #777;
  background: #fff;
  font-size: 13px;
  line-height: 17px;
  outline: 0;
}
.editor b { color: #444; }
.brace { color: #2030e0; }
.punc { color: #f020d0; }
.val { color: #205020; }
.typo { text-decoration: underline wavy #e02020 1px; }

/* subtitle grid */
.grid { flex: 1; min-height: 0; display: flex; border-top: 2px solid #777; border-left: 2px solid #888; border-bottom: 1px solid #ccc; padding-right: 1px; }
.rows { flex: 1; min-width: 0; overflow: hidden; background: #fff; }
table { width: 100%; table-layout: fixed; border-collapse: separate; border-spacing: 0; }
.c-n { width: 29px; }
.c-t { width: 64px; }
.c-cps { width: 38px; }
.c-style { width: 71px; }
.c-actor { width: 46px; }
th, td {
  height: 17px;
  padding: 0 2px;
  border-right: 1px solid #c0c0c0;
  border-bottom: 1px solid #c0c0c0;
  font-size: 11px;
  font-weight: 400;
  line-height: 16px;
  text-align: left;
  white-space: nowrap;
}
th { height: 18px; line-height: 17px; font-size: 12px; background: #a6cee6; border-bottom-color: #f050e0; }
th:nth-child(-n+4), td:nth-child(-n+4) { text-align: center; }
td:nth-child(n+2):nth-child(-n+3) { padding: 0; }
td:last-child { font-size: 12px; }
.active td { background: #ccffe6; border-bottom-color: #f050e0; }
.active td:last-child { border-right-color: #f050e0; }
.active td:first-child { border-left: 1px solid #f050e0; }
.hit td { background: #fffbe6; color: #f00; }
.comment td { background: #d8def5; }
.rows td:first-child { background: #c4ecc8; }
.scroll { width: 17px; flex: none; display: flex; flex-direction: column; align-items: center; }
.scroll button { width: 17px; height: 18px; display: grid; place-items: center; }
.scroll .end { margin-top: auto; }
.thumb { width: 15px; height: 17px; border: 1px solid #888; border-radius: 2px; background: repeating-linear-gradient(#666 0 1px, #eee 1px 3px) 4px 4px / 6px 8px no-repeat, linear-gradient(90deg, #fff, #ddd); }
.status { display: flex; height: 20px; flex: none; padding: 4px 0 2px; background: linear-gradient(#e4e4e4, #f2f2f2 40%, #eee); }
.status span { flex: 1 1 630px; }
.status span + span { flex-basis: 650px; border-left: 1px solid #ccc; }
```
